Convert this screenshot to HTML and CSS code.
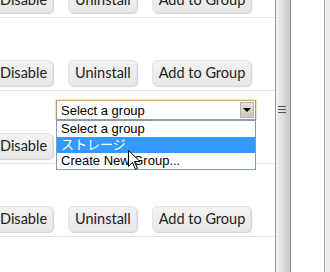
FILE: index.html
```html
<!DOCTYPE html>
<html lang="ja">
<head>
    <meta charset="UTF-8">
    <title>Extensions</title>
    <link rel="stylesheet" href="styles.css">
</head>
<body>
    <div class="window">
        <div class="list">
            <div class="item">
                <div class="actions">
                    <button class="btn">Disable</button>
                    <button class="btn">Uninstall</button>
                    <button class="btn">Add to Group</button>
                </div>
            </div>
            <div class="item">
                <div class="actions">
                    <button class="btn">Disable</button>
                    <button class="btn">Uninstall</button>
                    <button class="btn">Add to Group</button>
                </div>
            </div>
            <div class="item">
                <div class="picker">
                    <div class="select">
                        <span class="select-text">Select a group</span>
                        <span class="select-arrow"></span>
                    </div>
                    <ul class="options">
                        <li>Select a group</li>
                        <li class="active">ストレージ</li>
                        <li>Create New Group...</li>
                    </ul>
                </div>
                <div class="actions">
                    <button class="btn">Disable</button>
                    <button class="btn">Uninstall</button>
                    <button class="btn">Add to Group</button>
                </div>
            </div>
            <div class="item">
                <div class="actions">
                    <button class="btn">Disable</button>
                    <button class="btn">Uninstall</button>
                    <button class="btn">Add to Group</button>
                </div>
            </div>
        </div>
        <div class="splitter">
            <span class="grip"></span>
        </div>
        <div class="side"></div>
        <div class="edge"></div>
        <svg class="cursor" width="13" height="20" viewBox="0 0 13 20">
            <path d="M0.5 0.5 L0.5 16.5 L4.5 12.5 L7.5 19.5 L9.5 18.5 L6.5 11.5 L12 11.5 Z" fill="#fff" stroke="#000" stroke-width="1" stroke-linejoin="miter"/>
        </svg>
    </div>
</body>
</html>
```

FILE: styles.css
```css
body {
    margin: 0;
    background: #fff;
    font-family: Lato, "Open Sans", sans-serif;
    overflow: hidden;
}
.window {
    position: relative;
    display: flex;
    height: 272px;
    overflow: hidden;
}
.list {
    width: 275px;
    margin-top: -55px;
    flex: none;
}
.item {
    position: relative;
    height: 73px;
    box-sizing: border-box;
    border-bottom: 1px solid #e4e4e4;
    display: flex;
    flex-direction: column;
    justify-content: flex-end;
    padding-bottom: 4px;
}
.actions {
    display: flex;
    gap: 15px;
    margin-left: -7px;
}
.btn {
    font-family: Lato, "Open Sans", sans-serif;
    font-size: 14.5px;
    color: #222;
    height: 26px;
    padding: 0 5px 1px 6px;
    border: 1px solid #e2e2e2;
    border-radius: 5px;
    background: linear-gradient(#f2f2f2, #e8e8e8);
    box-shadow: 1px 1px 1px rgba(0, 0, 0, 0.18);
}
.picker {
    position: absolute;
    left: 56px;
    top: 9px;
    width: 200px;
    z-index: 2;
}
.select {
    display: flex;
    align-items: center;
    height: 18px;
    border: 1px solid #a39a86;
    border-top-color: #e2a955;
    box-shadow: 0 0 0 1px #f6e3bf;
    background: #fff;
    font-family: "Liberation Sans", Arial, sans-serif;
    font-size: 13px;
    color: #000;
    padding-left: 4px;
}
.select-text {
    flex: 1;
}
.select-arrow {
    width: 14px;
    height: 16px;
    margin-right: 1px;
    background: linear-gradient(#e4e2dc, #c9c6be);
    border: 1px solid #b9b5ab;
    box-sizing: border-box;
    display: flex;
    align-items: center;
    justify-content: center;
}
.select-arrow::after {
    content: "";
    border-left: 4px solid transparent;
    border-right: 4px solid transparent;
    border-top: 4px solid #000;
}
.options {
    list-style: none;
    margin: 0;
    padding: 0;
    border: 1px solid #7f9db9;
    background: #fff;
    font-family: "Liberation Sans", Arial, "Noto Sans CJK JP", sans-serif;
    font-size: 13px;
    color: #000;
}
.options li {
    height: 16px;
    line-height: 16px;
    padding-left: 4px;
}
.options li.active {
    background: #3399ff;
    color: #fff;
}
.splitter {
    width: 14px;
    flex: none;
    border-left: 1px solid #9c9c9c;
    border-right: 1px solid #8e8e8e;
    background: linear-gradient(to right, #f2f2f2, #dedede 50%, #c6c6c6);
    position: relative;
}
.grip {
    position: absolute;
    left: 2px;
    top: 106px;
    width: 8px;
    height: 9px;
    background: repeating-linear-gradient(#555 0 1px, transparent 1px 3px);
}
.side {
    width: 33px;
    flex: none;
    background: #fff;
}
.edge {
    flex: 1;
    border-left: 1px solid #a8a8a8;
    background: #ececec;
}
.cursor {
    position: absolute;
    left: 128px;
    top: 150px;
    z-index: 3;
}
```
